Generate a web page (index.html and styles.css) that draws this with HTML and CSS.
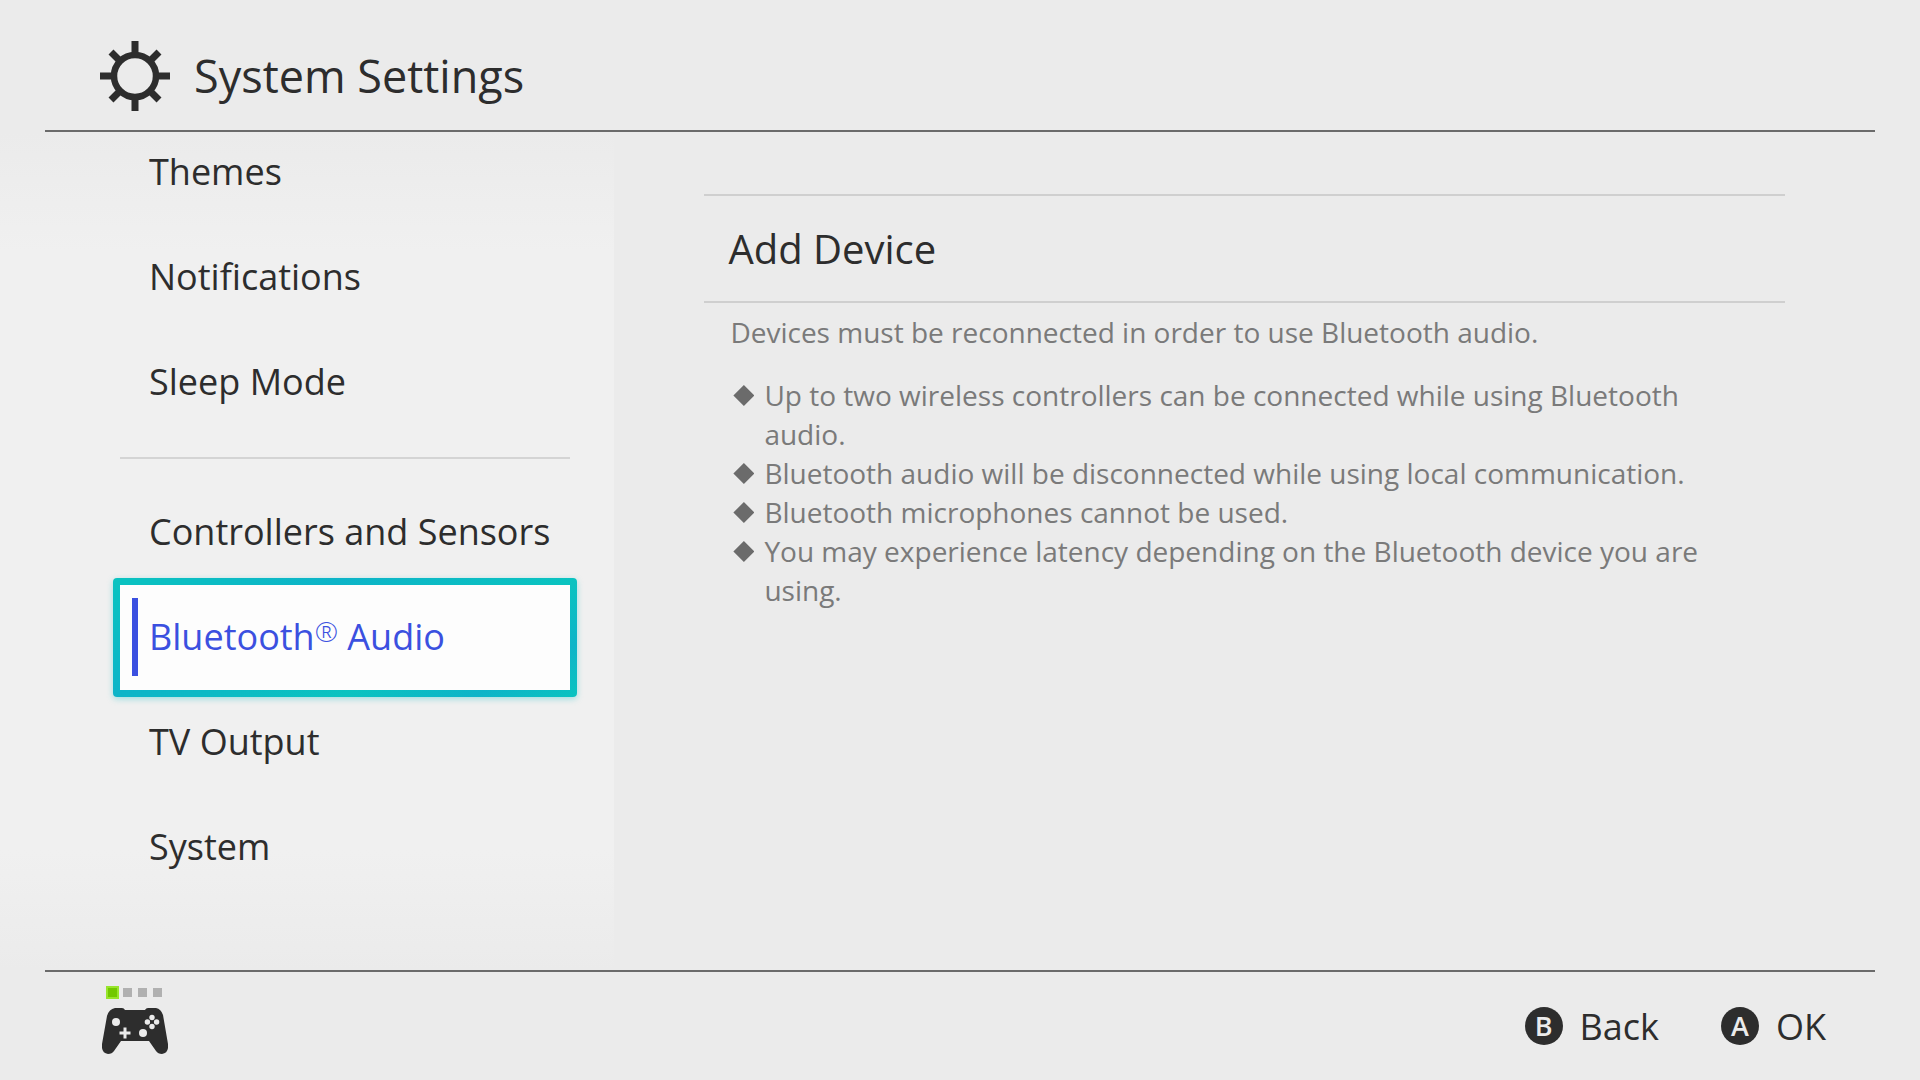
FILE: index.html
```html
<!DOCTYPE html>
<html lang="en">
<head>
    <meta charset="UTF-8">
    <meta name="viewport" content="width=device-width, initial-scale=1.0">
    <title>System Settings</title>
    <link rel="stylesheet" href="styles.css">
</head>
<body>
    <header class="header">
        <svg class="gear" viewBox="0 0 70 70" aria-hidden="true">
            <circle cx="35" cy="35" r="21" fill="none" stroke="#2d2d2d" stroke-width="6.500"/>
            <path d="M35 0V14M35 56V70M0 35H14M56 35H70M11 11L20 20M50 50L59 59M59 11L50 20M20 50L11 59" stroke="#2d2d2d" stroke-width="7"/>
        </svg>
        <h1>System Settings</h1>
    </header>

    <div class="content">
        <nav class="sidebar">
            <ul class="menu">
                <li><a class="menu-item" href="#">Themes</a></li>
                <li><a class="menu-item" href="#">Notifications</a></li>
                <li><a class="menu-item" href="#">Sleep Mode</a></li>
                <li class="divider"></li>
                <li><a class="menu-item" href="#">Controllers and Sensors</a></li>
                <li><a class="menu-item selected" href="#" aria-current="page"><span>Bluetooth<span class="reg">®</span> Audio</span></a></li>
                <li><a class="menu-item" href="#">TV Output</a></li>
                <li><a class="menu-item" href="#">System</a></li>
            </ul>
        </nav>

        <main class="panel">
            <button class="add-device" type="button">Add Device</button>
            <div class="notes">
                <p>Devices must be reconnected in order to use Bluetooth audio.</p>
                <ul>
                    <li>Up to two wireless controllers can be connected while using Bluetooth audio.</li>
                    <li>Bluetooth audio will be disconnected while using local communication.</li>
                    <li>Bluetooth microphones cannot be used.</li>
                    <li>You may experience latency depending on the Bluetooth device you are using.</li>
                </ul>
            </div>
        </main>
    </div>

    <footer class="footer">
        <div class="controller">
            <div class="players">
                <span class="player on"></span>
                <span class="player"></span>
                <span class="player"></span>
                <span class="player"></span>
            </div>
            <svg class="pad" viewBox="0 0 66 46" aria-hidden="true">
                <path d="M13 0H20Q22 0 23 2H43Q44 0 46 0H54Q59 1 61 7L66 36Q67 45 60 46Q56 46 54 43L47 33H19L12 43Q10 46 6 46Q-1 45 0 36L5 8Q7 1 13 0Z" fill="#2d2d2d"/>
                <g fill="#ebebeb">
                    <circle cx="14" cy="14" r="4"/>
                    <circle cx="41" cy="25" r="4"/>
                    <circle cx="50" cy="9.500" r="2.700"/>
                    <circle cx="50" cy="18.500" r="2.700"/>
                    <circle cx="45.400" cy="14" r="2.700"/>
                    <circle cx="54.600" cy="14" r="2.700"/>
                    <path d="M21.500 19.500H24.500V23.500H28.500V26.500H24.500V30.500H21.500V26.500H17.500V23.500H21.500Z"/>
                </g>
            </svg>
        </div>
        <div class="actions">
            <button class="action" type="button"><span class="key">B</span>Back</button>
            <button class="action" type="button"><span class="key">A</span>OK</button>
        </div>
    </footer>
</body>
</html>
```
FILE: styles.css
```css
* {
    box-sizing: border-box;
}
body {
    display: flex;
    flex-direction: column;
    min-height: 100vh;
    margin: 0;
    background-color: #ebebeb;
    color: #2d2d2d;
    font-family: "Open Sans", "Noto Sans", sans-serif;
}
ul {
    list-style: none;
    margin: 0;
    padding: 0;
}
button {
    border: none;
    background: none;
    color: inherit;
    font: inherit;
    cursor: pointer;
}

/* header */
.header {
    display: flex;
    align-items: center;
    gap: 24px;
    height: 132px;
    margin: 0 45px;
    padding: 22px 55px 0;
    border-bottom: 2px solid #6b6b6b;
}
.gear {
    width: 70px;
    height: 70px;
}
h1 {
    margin: 0;
    font-size: 45px;
    font-weight: 400;
    line-height: 60px;
}

/* left menu */
.content {
    display: flex;
    flex: 1;
}
.sidebar {
    width: 32%;
    padding-left: 120px;
    background: linear-gradient(#ebebeb, #f0f0f0 120px, #f0f0f0 calc(100% - 120px), #ebebeb);
}
.menu {
    width: 450px;
    margin-top: -12px;
}
.menu-item {
    display: flex;
    align-items: center;
    position: relative;
    height: 105px;
    padding: 0 0 2px 29px;
    color: inherit;
    font-size: 36px;
    text-decoration: none;
}
.divider {
    height: 45px;
    border-bottom: 21px solid transparent;
    box-shadow: inset 0 -2px #d4d4d4;
}
.selected {
    height: 119px;
    margin: -7px;
    border: 7px solid transparent;
    border-radius: 4px;
    background: linear-gradient(#fdfdfd, #fdfdfd) padding-box, linear-gradient(153deg, #0ac3c0, #0db4c8 33%, #0ac3c0 66%, #0db4c8 85%, #0ac3c0) border-box;
    box-shadow: 0 2px 6px rgba(10, 190, 195, 0.35);
    color: #3b50e0;
}
.selected::after {
    content: "";
    position: absolute;
    left: 12px;
    top: 13px;
    bottom: 14px;
    width: 6px;
    background-color: #3b50e0;
}
.reg {
    font-size: 28px;
    font-weight: 300;
    line-height: 1;
    vertical-align: 8px;
}

/* right side */
.panel {
    flex: 1;
    padding: 62px 135px 0 90px;
}
.add-device {
    display: block;
    width: 100%;
    height: 109px;
    padding: 0 24px;
    border-top: 2px solid #cfcfcf;
    border-bottom: 2px solid #cfcfcf;
    font-size: 40px;
    text-align: left;
}
.notes {
    padding: 10px 60px 0 26px;
    color: #7a7a7a;
    font-size: 28px;
    line-height: 39px;
}
.notes p {
    margin: 0 0 24px;
}
.notes li {
    position: relative;
    padding-left: 34px;
}
.notes li::before {
    content: "";
    position: absolute;
    left: 3px;
    top: 9px;
    width: 21px;
    height: 21px;
    background-color: #6b6b6b;
    clip-path: polygon(50% 0, 100% 50%, 50% 100%, 0 50%);
}

/* footer */
.footer {
    display: flex;
    justify-content: space-between;
    height: 110px;
    margin: 0 45px;
    padding: 14px 49px 0 57px;
    border-top: 2px solid #6b6b6b;
}
.players {
    display: flex;
    align-items: center;
    gap: 6px;
    height: 13px;
    margin: 0 0 9px 4px;
}
.player {
    width: 9px;
    height: 9px;
    background-color: #b0b0b0;
}
.player.on {
    width: 13px;
    height: 13px;
    margin-right: -2px;
    border: 2px solid #98e52c;
    background-color: #72c800;
}
.pad {
    display: block;
    width: 66px;
    height: 46px;
}
.actions {
    display: flex;
    gap: 62px;
    height: 80px;
}
.action {
    display: flex;
    align-items: center;
    gap: 17px;
    padding: 0;
    font-size: 36px;
}
.key {
    width: 38px;
    height: 38px;
    border-radius: 50%;
    background-color: #2d2d2d;
    color: #ebebeb;
    font-size: 27px;
    font-weight: 600;
    line-height: 38px;
    text-align: center;
}
```
